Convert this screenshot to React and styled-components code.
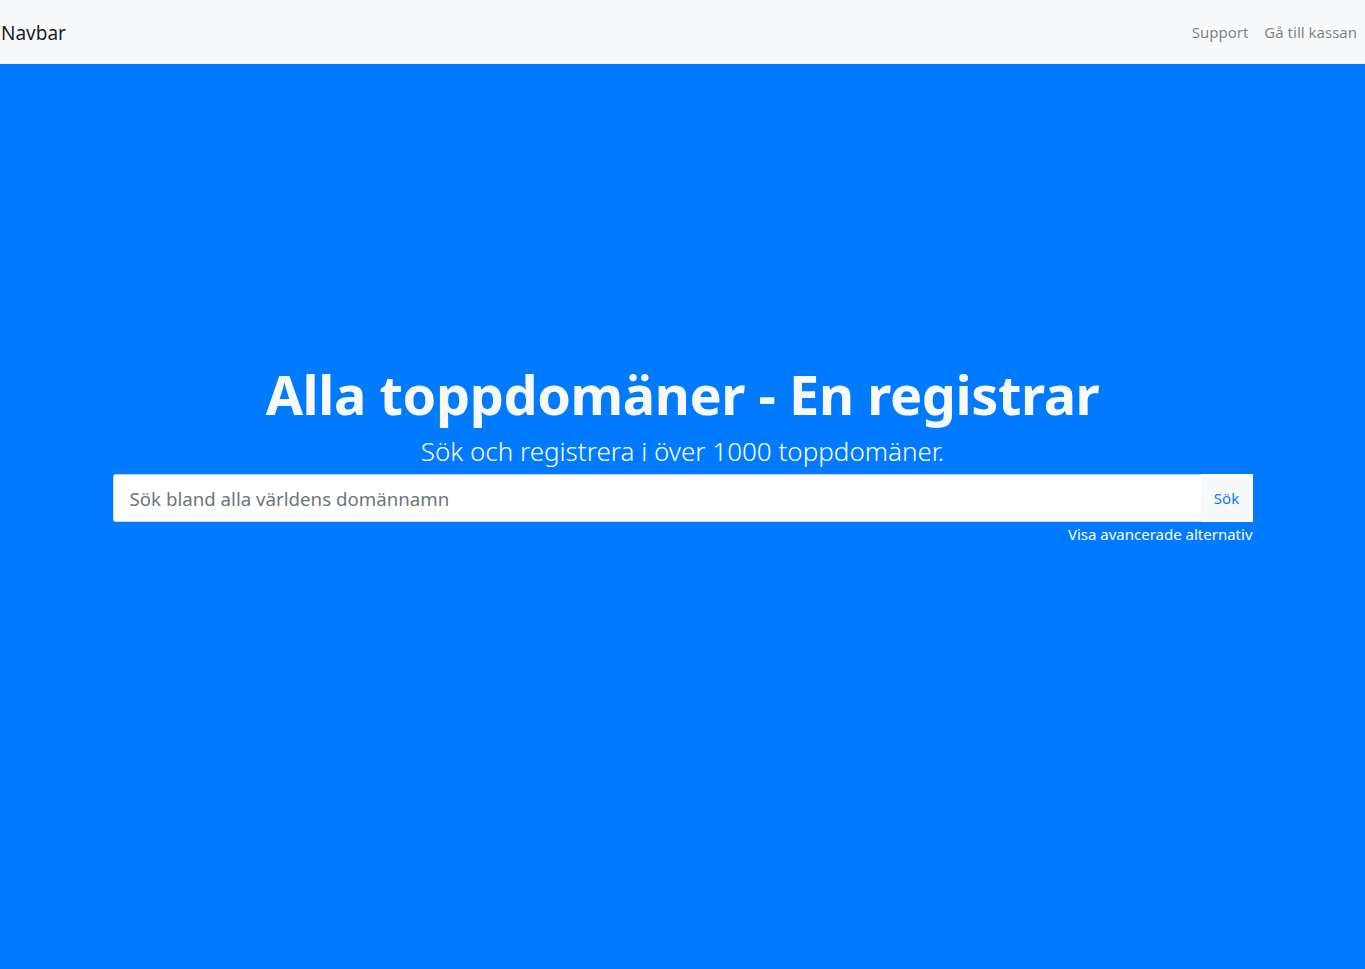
import styled, { createGlobalStyle } from "styled-components";

const GlobalStyle = createGlobalStyle`
  html, body {
    margin: 0;
    padding: 0;
  }
  body {
    font-family: "Noto Sans", "Open Sans", sans-serif;
    background-color: #007bff;
  }
`;

const Page = styled.div`
  min-height: 969px;
  display: flex;
  flex-direction: column;
  background-color: #007bff;
`;

const Navbar = styled.nav`
  height: 64px;
  display: flex;
  align-items: center;
  justify-content: space-between;
  background-color: #f8f9fa;
  padding: 0;
  box-sizing: border-box;
`;

const Brand = styled.a`
  font-size: 19px;
  color: rgba(0, 0, 0, 0.9);
  text-decoration: none;
  margin: 2px 0 0 1px;
`;

const NavLinks = styled.div`
  display: flex;
`;

const NavLink = styled.a`
  font-size: 15px;
  color: rgba(0, 0, 0, 0.5);
  padding: 0 8px;
  text-decoration: none;
`;

const Hero = styled.main`
  flex: 1;
  display: flex;
  flex-direction: column;
  align-items: center;
  padding-top: 298px;
  color: #f8f9fa;
`;

const Container = styled.div`
  width: 1140px;
  display: flex;
  flex-direction: column;
  align-items: center;
`;

const Title = styled.h1`
  margin: 0;
  font-size: 54px;
  font-weight: 700;
  line-height: 64px;
  letter-spacing: -0.4px;
`;

const Lead = styled.p`
  margin: 8px 0 0;
  font-size: 26px;
  font-weight: 300;
  line-height: 34px;
  color: #ffffff;
`;

const SearchRow = styled.form`
  width: 100%;
  display: flex;
  margin-top: 6px;
`;

const SearchInput = styled.input`
  flex: 1;
  height: 48px;
  box-sizing: border-box;
  border: 1px solid #ced4da;
  border-right: none;
  border-radius: 3px 0 0 3px;
  padding: 0 16px;
  font-family: inherit;
  font-size: 18.7px;
  color: #495057;
  outline: none;
  &::placeholder {
    color: #6c757d;
  }
`;

const SearchButton = styled.button`
  width: 52px;
  height: 48px;
  border: none;
  background-color: #f8f9fa;
  color: #007bff;
  font-family: inherit;
  font-size: 15px;
  padding: 0;
  cursor: pointer;
`;

const AdvancedLink = styled.a`
  align-self: flex-end;
  font-size: 15px;
  line-height: 22px;
  color: #ffffff;
  text-decoration: none;
  margin-top: 1px;
`;

export default function App() {
  return (
    <>
      <GlobalStyle />
      <Page>
        <Navbar>
          <Brand href="#">Navbar</Brand>
          <NavLinks>
            <NavLink href="#">Support</NavLink>
            <NavLink href="#">Gå till kassan</NavLink>
          </NavLinks>
        </Navbar>
        <Hero>
          <Container>
            <Title>Alla toppdomäner - En registrar</Title>
            <Lead>Sök och registrera i över 1000 toppdomäner.</Lead>
            <SearchRow onSubmit={(e) => e.preventDefault()}>
              <SearchInput placeholder="Sök bland alla världens domännamn" />
              <SearchButton type="submit">Sök</SearchButton>
            </SearchRow>
            <AdvancedLink href="#">Visa avancerade alternativ</AdvancedLink>
          </Container>
        </Hero>
      </Page>
    </>
  );
}
